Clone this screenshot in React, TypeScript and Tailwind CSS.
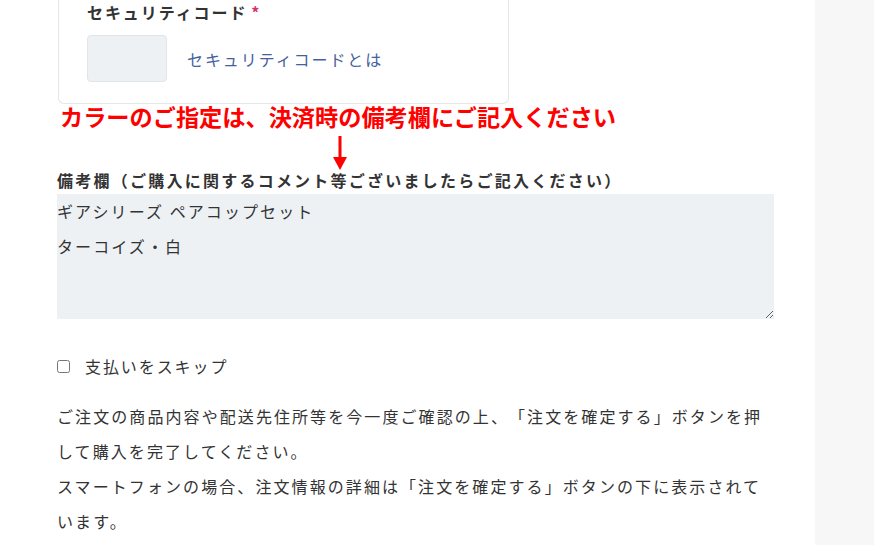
const jp = { fontFamily: '"Noto Sans CJK JP", "Noto Sans", sans-serif' }

function DownArrow() {
  return (
    <svg width="14" height="34" viewBox="0 0 14 34" className="absolute left-[276px] top-[-35px]">
      <rect x="5.5" y="0" width="3" height="24" fill="#ff0000" />
      <polygon points="0,21 14,21 7,34" fill="#ff0000" />
    </svg>
  )
}

export default function App() {
  return (
    <div
      className="flex h-[545px] w-[874px] overflow-hidden bg-white text-[#333] [text-spacing-trim:space-all]"
      style={jp}
    >
      <main className="w-[815px] pl-[57px]">
        <section className="ml-px w-[451px] rounded-b-md border-x border-b border-[#e6e6e6] pb-[21px] pl-[28px]">
          <div className="text-[16px] font-bold leading-[24px] tracking-[0.12em]">
            セキュリティコード<span className="ml-1 text-[#d6336c]">*</span>
          </div>
          <div className="mt-[11px] flex items-center gap-5">
            <div className="h-[47px] w-[80px] rounded border border-[#e0e5ea] bg-[#edf1f4]" />
            <a className="text-[16px] tracking-[0.12em] text-[#45619c]">セキュリティコードとは</a>
          </div>
        </section>

        <p className="mt-[-1px] pl-[3px] text-[23.2px] font-bold leading-[26px] text-[#ff0000]">
          カラーのご指定は、決済時の備考欄にご記入ください
        </p>

        <div className="relative mt-[42px]">
          <DownArrow />
          <label className="block text-[16px] font-bold leading-[18px] tracking-[0.14em]">
            備考欄（ご購入に関するコメント等ございましたらご記入ください）
          </label>
          <textarea
            className="mt-[5px] block h-[125px] w-[717px] resize-y bg-[#edf1f4] px-0 py-0 text-[16px] leading-[35px] tracking-[0.13em] outline-none"
            defaultValue={'ギアシリーズ ペアコップセット\nターコイズ・白'}
          />
        </div>

        <label className="mt-[35px] flex items-center gap-[15px] text-[16px] tracking-[0.12em]">
          <input type="checkbox" className="h-[13px] w-[13px]" />
          支払いをスキップ
        </label>

        <p className="mt-[21px] w-[712px] text-[16px] leading-[35px] tracking-[0.13em]">
          ご注文の商品内容や配送先住所等を今一度ご確認の上、「注文を確定する」ボタンを押して購入を完了してください。
          <br />
          スマートフォンの場合、注文情報の詳細は「注文を確定する」ボタンの下に表示されています。
        </p>
      </main>
      <aside className="flex-1 bg-[#f7f7f7]" />
    </div>
  )
}
